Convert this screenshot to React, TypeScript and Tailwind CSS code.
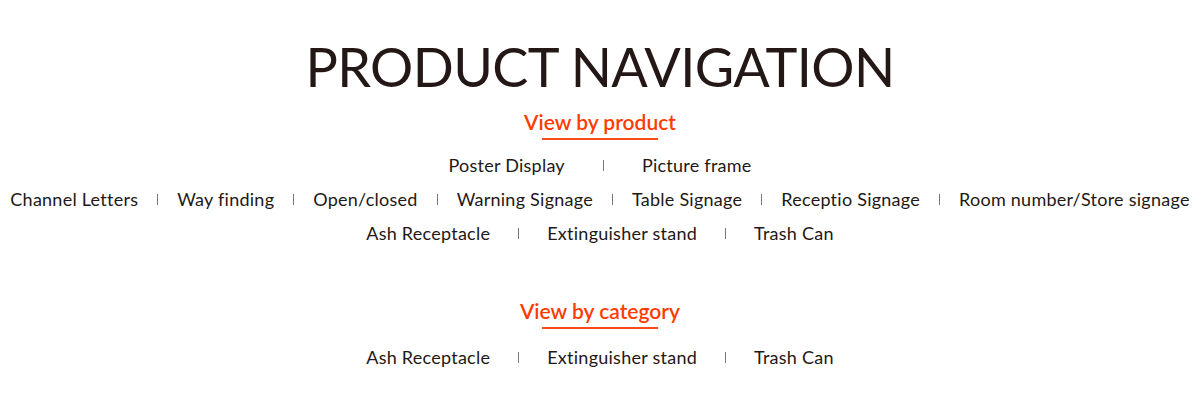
const productRows: { items: string[]; gap: string }[] = [
  { items: ["Poster Display", "Picture frame"], gap: "gap-x-[38px]" },
  {
    items: [
      "Channel Letters",
      "Way finding",
      "Open/closed",
      "Warning Signage",
      "Table Signage",
      "Receptio Signage",
      "Room number/Store signage",
    ],
    gap: "gap-x-[19px]",
  },
  { items: ["Ash Receptacle", "Extinguisher stand", "Trash Can"], gap: "gap-x-[28px]" },
]

const categoryRow = ["Ash Receptacle", "Extinguisher stand", "Trash Can"]

function NavRow({ items, gap }: { items: string[]; gap: string }) {
  return (
    <div className={`flex items-center justify-center ${gap} h-[34px]`}>
      {items.map((item, i) => (
        <div key={item} className={`flex items-center ${gap}`}>
          {i > 0 && <span className="w-px h-[11px] bg-[#777]" />}
          <a className="text-[18px] tracking-[0.25px] text-[#231815] whitespace-nowrap cursor-pointer">{item}</a>
        </div>
      ))}
    </div>
  )
}

function SectionTitle({ children }: { children: string }) {
  return (
    <div className="flex flex-col items-center">
      <h3 className="text-[21px] font-semibold text-[#ff3c00] leading-[24px]">{children}</h3>
      <span className="mt-[4px] w-[116px] h-[2px] bg-[#ff4a1a]" />
    </div>
  )
}

export default function App() {
  return (
    <div className="w-[1200px] h-[400px] bg-white font-['Lato',sans-serif] flex flex-col items-center pt-[37px]">
      <h1 className="text-[54px] leading-[60px] text-[#231815] tracking-[-0.6px]">PRODUCT NAVIGATION</h1>
      <div className="mt-[13px]">
        <SectionTitle>View by product</SectionTitle>
      </div>
      <div className="mt-[8px] flex flex-col">
        {productRows.map((row, i) => (
          <NavRow key={i} items={row.items} gap={row.gap} />
        ))}
      </div>
      <div className="mt-[49px]">
        <SectionTitle>View by category</SectionTitle>
      </div>
      <div className="mt-[11px]">
        <NavRow items={categoryRow} gap="gap-x-[28px]" />
      </div>
    </div>
  )
}
